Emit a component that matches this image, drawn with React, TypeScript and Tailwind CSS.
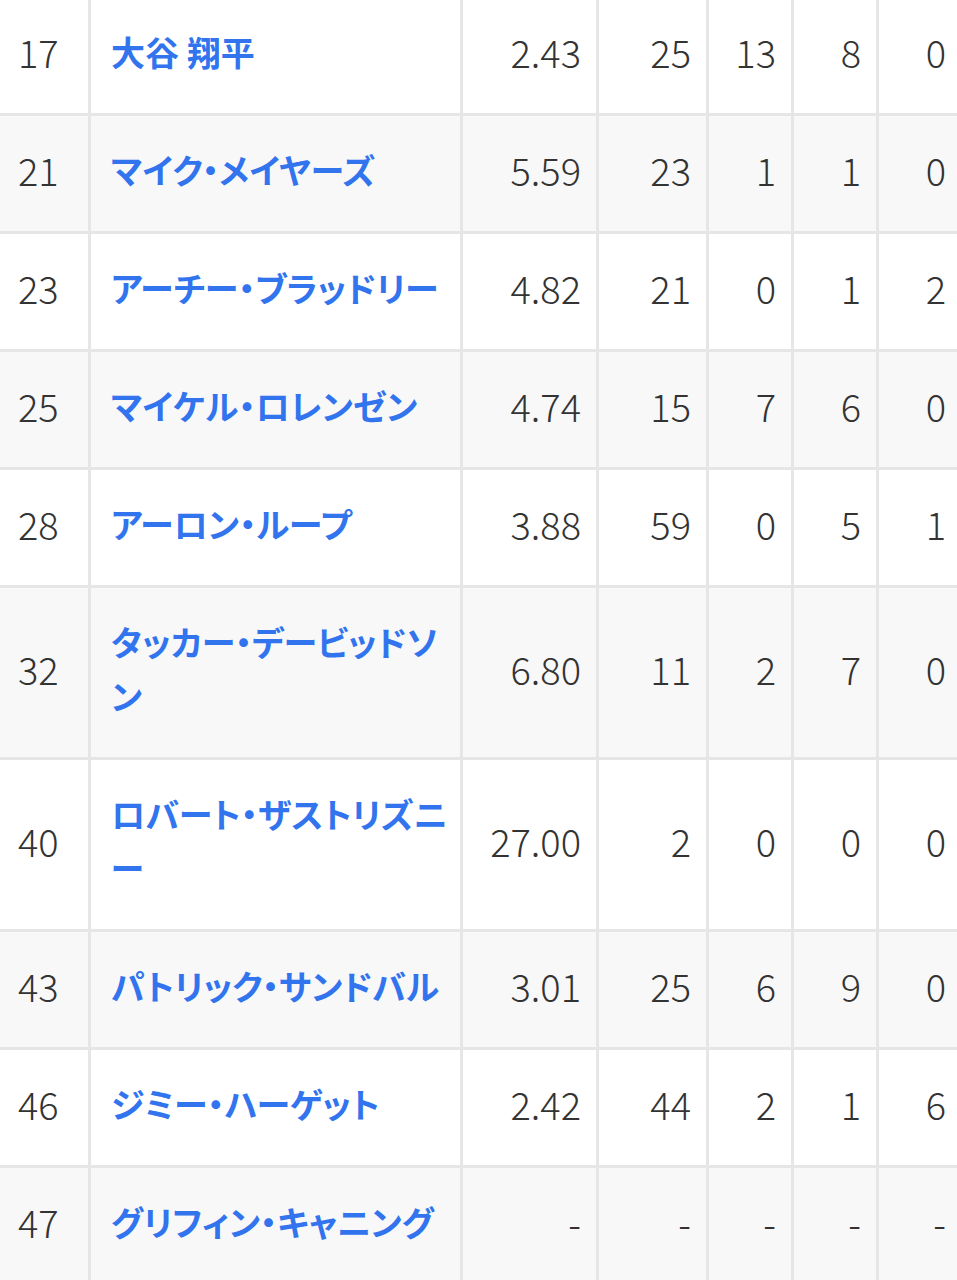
import React from 'react';

type Pitcher = {
  no: string;
  name: string;
  era: string;
  g: string;
  w: string;
  l: string;
  s: string;
};

const pitchers: Pitcher[] = [
  { no: '17', name: '大谷 翔平', era: '2.43', g: '25', w: '13', l: '8', s: '0' },
  { no: '21', name: 'マイク・メイヤーズ', era: '5.59', g: '23', w: '1', l: '1', s: '0' },
  { no: '23', name: 'アーチー・ブラッドリー', era: '4.82', g: '21', w: '0', l: '1', s: '2' },
  { no: '25', name: 'マイケル・ロレンゼン', era: '4.74', g: '15', w: '7', l: '6', s: '0' },
  { no: '28', name: 'アーロン・ループ', era: '3.88', g: '59', w: '0', l: '5', s: '1' },
  { no: '32', name: 'タッカー・デービッドソン', era: '6.80', g: '11', w: '2', l: '7', s: '0' },
  { no: '40', name: 'ロバート・ザストリズニー', era: '27.00', g: '2', w: '0', l: '0', s: '0' },
  { no: '43', name: 'パトリック・サンドバル', era: '3.01', g: '25', w: '6', l: '9', s: '0' },
  { no: '46', name: 'ジミー・ハーゲット', era: '2.42', g: '44', w: '2', l: '1', s: '6' },
  { no: '47', name: 'グリフィン・キャニング', era: '-', g: '-', w: '-', l: '-', s: '-' },
];

// shared cell styles
const cell = 'flex items-center border-r-[3px] border-[#e6e6e6] pt-[26.5px] pb-[34.5px] leading-[54px]';
const num = `${cell} justify-end pr-[15px] text-[38px] font-light text-[#333]`;

export default function App() {
  return (
    <div className="w-[957px] h-[1280px] overflow-hidden bg-white font-['Noto_Sans_CJK_JP','Noto_Sans',sans-serif]">
      <div className="-mt-[2px] w-[974px]">
        {pitchers.map((p, i) => (
          <div
            key={p.no}
            className={`grid grid-cols-[91px_372px_136px_110px_85px_85px_85px] border-b-[3px] border-[#e6e6e6] ${
              i % 2 === 1 ? 'bg-[#f8f8f8]' : 'bg-white'
            }`}
          >
            <div className={`${cell} pl-[18px] text-[38px] font-light text-[#333]`}>{p.no}</div>
            <div className={`${cell} pl-[20px] pr-[8px]`}>
              <a className="text-[34px] font-bold text-[#3174ee] [font-feature-settings:'palt']">{p.name}</a>
            </div>
            <div className={num}>{p.era}</div>
            <div className={num}>{p.g}</div>
            <div className={num}>{p.w}</div>
            <div className={num}>{p.l}</div>
            <div className={num}>{p.s}</div>
          </div>
        ))}
      </div>
    </div>
  );
}
